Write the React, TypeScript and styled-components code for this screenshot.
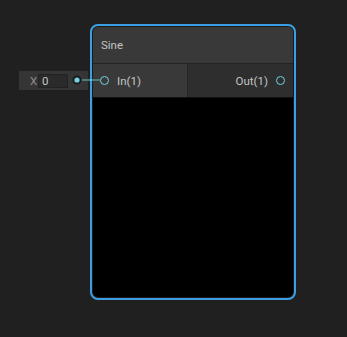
import React from "react";
import styled, { createGlobalStyle } from "styled-components";

const GlobalStyle = createGlobalStyle`
    html, body {
        margin: 0;
        padding: 0;
        background: #202020;
    }
    body {
        font-family: Roboto, "Open Sans", sans-serif;
        -webkit-font-smoothing: antialiased;
    }
`;

const Canvas = styled.div`
    position: relative;
    width: 347px;
    height: 337px;
    background: #202020;
    overflow: hidden;
`;

// node sits on the graph canvas at its own coordinates
const Node = styled.div<{ $x: number; $y: number }>`
    position: absolute;
    left: ${({ $x }) => $x}px;
    top: ${({ $y }) => $y}px;
    width: 206px;
    height: 276px;
    box-sizing: border-box;
    border: 2px solid #3c9fe3;
    border-radius: 8px;
    padding: 1px;
    background: #1a1a1a;
`;

const NodeInner = styled.div`
    display: flex;
    flex-direction: column;
    height: 100%;
`;

const Title = styled.div`
    height: 36px;
    display: flex;
    align-items: center;
    padding-left: 8px;
    background: #393939;
    border-bottom: 1px solid #232323;
    border-radius: 5px 5px 0 0;
    color: #c4c4c4;
    font-size: 11.5px;
`;

const Ports = styled.div`
    position: relative;
    display: flex;
    height: 33px;
    background: #2e2e2e;
`;

const PortColumn = styled.div<{ $side: "in" | "out" }>`
    display: flex;
    align-items: center;
    gap: 8px;
    width: ${({ $side }) => ($side === "in" ? "95px" : "auto")};
    flex: ${({ $side }) => ($side === "in" ? "none" : "1")};
    justify-content: ${({ $side }) => ($side === "in" ? "flex-start" : "flex-end")};
    padding: ${({ $side }) => ($side === "in" ? "0 0 0 7px" : "0 8px 0 0")};
    box-sizing: border-box;
    background: ${({ $side }) => ($side === "in" ? "#393939" : "#2e2e2e")};
    border-right: ${({ $side }) => ($side === "in" ? "1px solid #252525" : "none")};
`;

const PortLabel = styled.span`
    color: #c4c4c4;
    font-size: 11.5px;
`;

const PortDot = styled.span`
    width: 7px;
    height: 7px;
    border-radius: 50%;
    border: 1.5px solid #6fd4dc;
    box-sizing: content-box;
`;

const Preview = styled.div`
    flex: 1;
    background: #000;
    border-top: 1px solid #111;
    border-radius: 0 0 5px 5px;
`;

// inline default-value field that hangs left of the input port
const InlineField = styled.div`
    position: absolute;
    right: calc(100% + 5px);
    top: 7px;
    width: 69px;
    height: 19px;
    display: flex;
    align-items: center;
    padding-left: 11px;
    box-sizing: border-box;
    background: #353535;
`;

const FieldLabel = styled.span`
    color: #8c8c8c;
    font-size: 11.5px;
    width: 8px;
`;

const FieldInput = styled.div`
    width: 30px;
    height: 14px;
    box-sizing: border-box;
    display: flex;
    align-items: center;
    padding-left: 3px;
    background: #2a2a2a;
    border: 1px solid #222;
    color: #c4c4c4;
    font-size: 11.5px;
`;

const Wire = styled.svg`
    position: absolute;
    overflow: visible;
`;

export default function App() {
    return (
        <Canvas>
            <GlobalStyle />
            <Node $x={90} $y={24}>
                <NodeInner>
                    <Title>Sine</Title>
                    <Ports>
                        <InlineField>
                            <FieldLabel>X</FieldLabel>
                            <FieldInput>0</FieldInput>
                        </InlineField>
                        <PortColumn $side="in">
                            <PortDot />
                            <PortLabel>In(1)</PortLabel>
                        </PortColumn>
                        <PortColumn $side="out">
                            <PortLabel>Out(1)</PortLabel>
                            <PortDot />
                        </PortColumn>
                    </Ports>
                    <Preview />
                </NodeInner>
            </Node>
            <Wire width="40" height="14" style={{ left: 70, top: 73 }}>
                <line x1="12" y1="7" x2="30" y2="7" stroke="#4a7c7f" strokeWidth="2" />
                <circle cx="7" cy="7" r="4.5" fill="#1c1c1c" />
                <circle cx="7" cy="7" r="2.6" fill="#6fd4dc" />
                <circle cx="21" cy="7" r="1" fill="#6fd4dc" />
            </Wire>
        </Canvas>
    );
}
